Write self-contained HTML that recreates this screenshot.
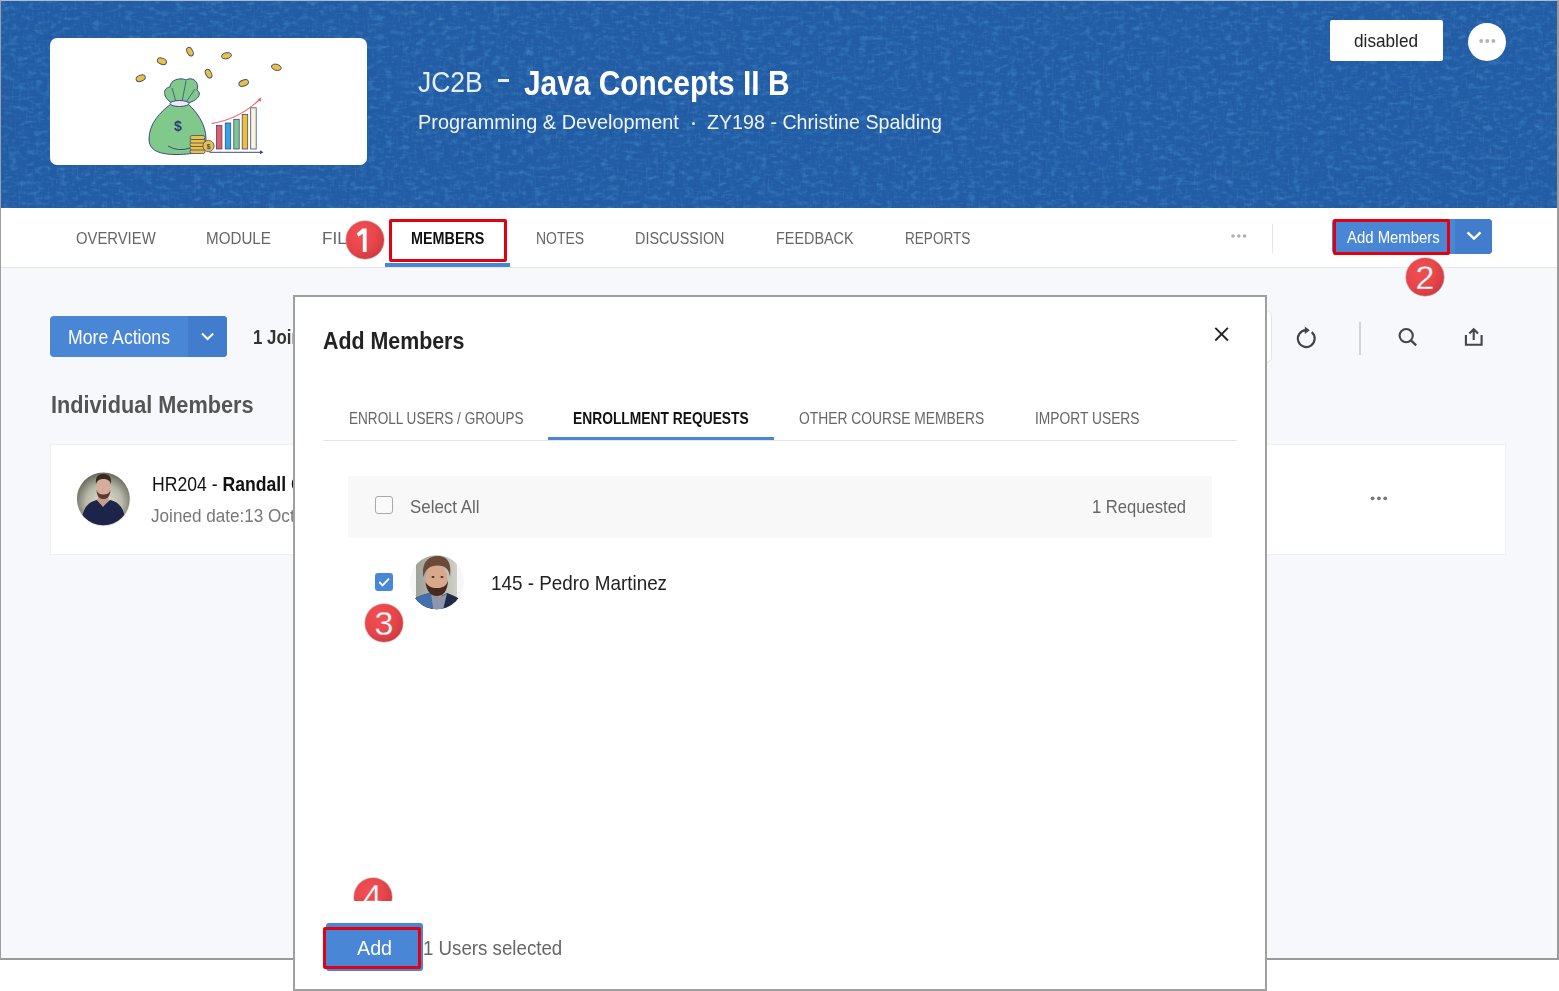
<!DOCTYPE html>
<html><head><meta charset="utf-8">
<style>
*{margin:0;padding:0;box-sizing:border-box}
html,body{width:1559px;height:991px;overflow:hidden;background:#fff;font-family:"Liberation Sans",sans-serif}
.a{position:absolute}
.t{position:absolute;white-space:nowrap;line-height:1;transform-origin:0 0}
#page{position:absolute;left:0;top:0;width:1559px;height:960px;background:#f7f8fb;border-left:1px solid #9c9fa3;border-top:1px solid #a9bdd0;border-right:2px solid #9a9a9a;border-bottom:2px solid #9a9a9a}
#banner{position:absolute;left:1px;top:1px;width:1556px;height:207px;background:#215ca4}
#tabbar{position:absolute;left:1px;top:208px;width:1556px;height:60px;background:#fff;border-bottom:1px solid #e6e8ee}
.badge{position:absolute;width:38px;height:38px;border-radius:50%;background:radial-gradient(circle at 38% 35%,#f24f53 0%,#e7464b 45%,#c9383e 85%,#b8343a 100%);box-shadow:0 0 0 0.5px rgba(150,40,45,.5)}
.badge span{position:absolute;left:0;width:38px;top:1.6px;text-align:center;color:#fff;font-size:34px;line-height:1;-webkit-text-stroke:0.3px #e2464b}
.ico{position:absolute;overflow:visible}
.redbox{position:absolute;border:3px solid #e3000f;border-radius:2px}
.tab{color:#666}
.mt{color:#666}
</style>
<style id="fit">
#jc2b{left:418.00px!important;top:66.52px!important;font-size:29.797px!important;transform:scaleX(0.8889)!important}
#java{left:524.00px!important;top:66.05px!important;font-size:35.902px!important;transform:scaleX(0.8318)!important}
#sub1{left:417.98px!important;top:113.21px!important;font-size:19.477px!important;transform:scaleX(1.0212)!important}
#sub2{left:707.00px!important;top:113.21px!important;font-size:19.477px!important;transform:scaleX(1.0099)!important}
#dis{left:1354.38px!important;top:32.18px!important;font-size:18.631px!important;transform:scaleX(0.9232)!important}
#tab1{left:75.81px!important;top:230.24px!important;font-size:16.425px!important;transform:scaleX(0.9034)!important}
#tab2{left:205.88px!important;top:230.24px!important;font-size:16.425px!important;transform:scaleX(0.9246)!important}
#tab3{left:322.13px!important;top:230.24px!important;font-size:16.425px!important;transform:scaleX(1.0400)!important}
#tab4{left:411.25px!important;top:230.24px!important;font-size:16.425px!important;transform:scaleX(0.8759)!important}
#tab5{left:535.52px!important;top:230.24px!important;font-size:16.425px!important;transform:scaleX(0.8500)!important}
#tab6{left:635.44px!important;top:230.24px!important;font-size:16.425px!important;transform:scaleX(0.8762)!important}
#tab7{left:775.50px!important;top:230.24px!important;font-size:16.425px!important;transform:scaleX(0.8773)!important}
#tab8{left:905.27px!important;top:230.24px!important;font-size:16.425px!important;transform:scaleX(0.8278)!important}
#addm{left:1347.19px!important;top:230.14px!important;font-size:15.843px!important;transform:scaleX(0.9414)!important}
#more{left:67.86px!important;top:327.81px!important;font-size:19.477px!important;transform:scaleX(0.9062)!important}
#join{left:253.18px!important;top:327.22px!important;font-size:20.640px!important;transform:scaleX(0.8178)!important}
#indiv{left:50.86px!important;top:393.34px!important;font-size:23.983px!important;transform:scaleX(0.9049)!important}
#hr{left:151.62px!important;top:475.21px!important;font-size:19.477px!important;transform:scaleX(0.9047)!important}
#joined{left:151.19px!important;top:507.04px!important;font-size:18.024px!important;transform:scaleX(0.9500)!important}
#mtitle{left:322.50px!important;top:329.22px!important;font-size:24.419px!important;transform:scaleX(0.8756)!important}
#m1{left:348.63px!important;top:410.94px!important;font-size:15.843px!important;transform:scaleX(0.8576)!important}
#m2{left:572.88px!important;top:410.94px!important;font-size:15.843px!important;transform:scaleX(0.8726)!important}
#m3{left:799.37px!important;top:410.94px!important;font-size:15.843px!important;transform:scaleX(0.8741)!important}
#m4{left:1035.06px!important;top:410.94px!important;font-size:15.843px!important;transform:scaleX(0.8714)!important}
#sel{left:410.04px!important;top:498.32px!important;font-size:18.460px!important;transform:scaleX(0.9160)!important}
#req{left:1092.48px!important;top:498.32px!important;font-size:18.460px!important;transform:scaleX(0.9000)!important}
#pedro{left:490.63px!important;top:573.66px!important;font-size:19.768px!important;transform:scaleX(0.9546)!important}
#add{left:356.80px!important;top:937.62px!important;font-size:20.640px!important;transform:scaleX(0.9556)!important}
#usel{left:422.90px!important;top:937.62px!important;font-size:20.640px!important;transform:scaleX(0.9066)!important}
</style>
</head>
<body>
<div id="page"></div>
<div id="banner"></div>
<svg class="ico" style="left:1px;top:1px" width="1556" height="207" viewBox="0 0 1556 207">
<filter id="tx" x="0" y="0" width="100%" height="100%">
<feTurbulence type="fractalNoise" baseFrequency="0.45 0.09" numOctaves="3" seed="3" result="n1"/>
<feTurbulence type="fractalNoise" baseFrequency="0.09 0.45" numOctaves="3" seed="7" result="n2"/>
<feBlend in="n1" in2="n2" mode="lighten" result="n"/>
<feColorMatrix in="n" type="matrix" values="0 0 0 0 0.55  0 0 0 0 0.7  0 0 0 0 0.9  2.4 0 0 0 -1.25"/>
</filter>
<filter id="tx2" x="0" y="0" width="100%" height="100%">
<feTurbulence type="fractalNoise" baseFrequency="0.12 0.2" numOctaves="2" seed="11" result="n"/>
<feColorMatrix in="n" type="matrix" values="0 0 0 0 0.05  0 0 0 0 0.25  0 0 0 0 0.58  3 0 0 0 -1.5"/>
</filter>
<rect width="1556" height="207" filter="url(#tx2)" opacity="0.5"/>
<rect width="1556" height="207" filter="url(#tx)" opacity="0.16"/>
</svg>

<!-- logo card -->
<div class="a" style="left:50px;top:38px;width:317px;height:127px;background:#fff;border-radius:7px"></div>
<svg class="ico" style="left:50px;top:38px" width="317" height="127" viewBox="50 38 317 127">
<g fill="#e8c240" stroke="#45497a" stroke-width="0.9">
<ellipse cx="140.7" cy="78.2" rx="4.8" ry="3" transform="rotate(-22 140.7 78.2)"/>
<ellipse cx="161.9" cy="61.2" rx="4.8" ry="3" transform="rotate(22 161.9 61.2)"/>
<ellipse cx="190" cy="51.7" rx="4.6" ry="2.8" transform="rotate(62 190 51.7)"/>
<ellipse cx="226.5" cy="55.7" rx="5" ry="3" transform="rotate(-12 226.5 55.7)"/>
<ellipse cx="208.6" cy="73.7" rx="4.6" ry="2.8" transform="rotate(62 208.6 73.7)"/>
<ellipse cx="243.7" cy="83" rx="5" ry="3" transform="rotate(-22 243.7 83)"/>
<ellipse cx="276.4" cy="67.3" rx="5" ry="3" transform="rotate(15 276.4 67.3)"/>
</g>
<g stroke="#3d4a85" stroke-width="1">
<path d="M172,103 C163,98 162,88 170,87 C170,80 180,77 186,80 C192,76 200,82 197,90 C202,93 199,100 188,103 Z" fill="#80c98b"/>
<path d="M176,102 L172,88 M182,102 L186,81 M186,102 L195,89" fill="none" stroke-width="0.8"/>
<path d="M171,104 C160,112 149,124 149,139 C149,151 160,154.5 177,154.5 C195,154.5 206,151 206,139 C206,124 196,111 188,104 Z" fill="#80c98b"/>
<ellipse cx="179.5" cy="103.5" rx="9.5" ry="3" fill="#eceaf7"/>
<path d="M168,146 Q178,152 190,148" fill="none"/>
</g>
<text x="178" y="131" font-family="Liberation Sans" font-weight="bold" font-size="14" fill="#2f3d7a" text-anchor="middle">$</text>
<g fill="#e8c240" stroke="#45497a" stroke-width="0.8">
<rect x="190" y="149.5" width="15" height="4" rx="2"/>
<rect x="190" y="146" width="15" height="4" rx="2"/>
<rect x="190" y="142.5" width="15" height="4" rx="2"/>
<rect x="190" y="139" width="15" height="4" rx="2"/>
<rect x="190" y="135.5" width="15" height="4" rx="2"/>
<circle cx="208.5" cy="146" r="5.6"/>
</g>
<text x="208.5" y="149" font-family="Liberation Sans" font-weight="bold" font-size="7" fill="#45497a" text-anchor="middle">$</text>
<g stroke="#3d4a85" stroke-width="0.8">
<rect x="216.4" y="125.4" width="5.5" height="23.6" fill="#ea5a62"/>
<rect x="225.3" y="123" width="5.4" height="26" fill="#2fa7e3"/>
<rect x="233.8" y="119.3" width="5.4" height="29.7" fill="#7ec88a"/>
<rect x="242.2" y="114.5" width="5.5" height="34.5" fill="#f2c22e"/>
<rect x="250.7" y="107.8" width="5.5" height="41.2" fill="#fbf3dc"/>
</g>
<path d="M209.5,152.3 L262,152.3" stroke="#3d4a85" stroke-width="1"/>
<path d="M260,150.3 L263.5,152.3 L260,154.3 Z" fill="#3d4a85"/>
<path d="M211.6,123.6 Q240,119 260,99" fill="none" stroke="#ec6a6a" stroke-width="1.1"/>
<path d="M257.5,99.5 L261.5,97.5 L260.5,102 Z" fill="#ec6a6a"/>
</svg>

<!-- title -->
<div class="t" id="jc2b" style="color:#e6eef8">JC2B</div>
<div class="a" style="left:498px;top:79px;width:11px;height:3px;background:#e6eef8"></div>
<div class="t" id="java" style="font-weight:bold;color:#fff">Java Concepts II B</div>
<div class="t" id="sub1" style="color:#f0f4fa">Programming &amp; Development</div>
<div class="a" style="left:692px;top:122px;width:3px;height:3px;border-radius:50%;background:#dfe7f2"></div>
<div class="t" id="sub2" style="color:#f0f4fa">ZY198 - Christine Spalding</div>

<!-- disabled + more -->
<div class="a" style="left:1330px;top:20px;width:113px;height:41px;background:#fff;border-radius:2px"></div>
<div class="t" id="dis" style="color:#222">disabled</div>
<div class="a" style="left:1468px;top:23px;width:38px;height:38px;background:#fff;border-radius:50%"></div>
<svg class="ico" style="left:1468px;top:23px" width="38" height="38" viewBox="1468 23 38 38"><g fill="#b4b4b4"><circle cx="1481.2" cy="41" r="2"/><circle cx="1487.3" cy="41" r="2"/><circle cx="1493.4" cy="41" r="2"/></g></svg>

<div id="tabbar"></div>
<div class="t tab" id="tab1">OVERVIEW</div>
<div class="t tab" id="tab2">MODULE</div>
<div class="t tab" id="tab3">FILES</div>
<div class="t tab" id="tab4" style="color:#111;font-weight:bold">MEMBERS</div>
<div class="t tab" id="tab5">NOTES</div>
<div class="t tab" id="tab6">DISCUSSION</div>
<div class="t tab" id="tab7">FEEDBACK</div>
<div class="t tab" id="tab8">REPORTS</div>
<div class="a" style="left:385px;top:263px;width:125px;height:4px;background:#4a86d6"></div>
<div class="redbox" style="left:389px;top:219px;width:118px;height:43px"></div>
<div class="badge" style="left:346px;top:221px"></div>
<svg class="ico" style="left:346px;top:221px" width="38" height="38" viewBox="346 221 38 38"><path d="M362.6,228.4 L366.6,228.4 L366.6,252 L362.8,252 L362.8,233.8 L358.4,236.8 L356.8,233.6 Z" fill="#fff"/></svg>

<div class="a" style="left:1272px;top:224px;width:1px;height:29px;background:#e6e6e6"></div>
<svg class="ico" style="left:1225px;top:230px" width="28" height="12" viewBox="1225 230 28 12"><g fill="#b0b0b0"><circle cx="1233" cy="236" r="1.8"/><circle cx="1238.8" cy="236" r="1.8"/><circle cx="1244.6" cy="236" r="1.8"/></g></svg>
<div class="a" style="left:1332px;top:219px;width:160px;height:35px;background:#4a86d6;border-radius:4px"></div>
<div class="a" style="left:1455px;top:219px;width:37px;height:35px;background:#427dcd;border-radius:0 4px 4px 0"></div>
<div class="t" id="addm" style="color:#fff">Add Members</div>
<svg class="ico" style="left:1460px;top:225px" width="28" height="20" viewBox="1460 225 28 20"><path d="M1467.5,232.3 L1474,238.5 L1480.5,232.3" fill="none" stroke="#fff" stroke-width="2.4"/></svg>
<div class="redbox" style="left:1333px;top:219px;width:117px;height:36px"></div>
<div class="badge" style="left:1406px;top:258px"><span>2</span></div>

<!-- body -->
<div class="a" style="left:50px;top:316px;width:177px;height:41px;background:#4a86d6;border-radius:4px"></div>
<div class="a" style="left:188px;top:316px;width:39px;height:41px;background:#427dcd;border-radius:0 4px 4px 0"></div>
<div class="t" id="more" style="color:#fff">More Actions</div>
<svg class="ico" style="left:195px;top:326px" width="24" height="20" viewBox="195 326 24 20"><path d="M202,333.5 L207.6,339 L213.2,333.5" fill="none" stroke="#fff" stroke-width="2"/></svg>
<!-- search input edge behind modal -->
<div class="a" style="left:1180px;top:310px;width:92px;height:53px;border:1px solid #e3e5ea;border-radius:6px;background:#fff"></div>
<svg class="ico" style="left:1290px;top:318px" width="200" height="40" viewBox="1290 318 200 40">
<path d="M1311.7,332.2 A8.4,8.4 0 1 1 1305.8,330.2" fill="none" stroke="#444" stroke-width="2.2"/>
<path d="M1304.8,326.4 L1309.8,330.2 L1304.8,334 Z" fill="#444"/>
<circle cx="1406.2" cy="335.6" r="6.6" fill="none" stroke="#444" stroke-width="2.1"/>
<path d="M1411,340.4 L1416.2,345.4" stroke="#444" stroke-width="2.2"/>
<path d="M1465.9,335 L1465.9,344.7 L1481.6,344.7 L1481.6,335" fill="none" stroke="#444" stroke-width="2.1"/>
<path d="M1473.7,340 L1473.7,329.5 M1469.4,333.6 L1473.7,329.2 L1478,333.6" fill="none" stroke="#444" stroke-width="2.1"/>
</svg>
<div class="a" style="left:1359px;top:322px;width:1.5px;height:33px;background:#d3d3d3"></div>
<div class="t" id="join" style="font-weight:bold;color:#333">1 Joi<span class="x">ned</span></div>
<div class="t" id="indiv" style="font-weight:bold;color:#555">Individual Members</div>

<div class="a" style="left:50px;top:444px;width:1456px;height:111px;background:#fff;border:1px solid #eef0f3"></div>
<svg class="ico" style="left:1365px;top:492px" width="28" height="12" viewBox="1365 492 28 12"><g fill="#777"><circle cx="1372.6" cy="498.3" r="1.9"/><circle cx="1378.9" cy="498.3" r="1.9"/><circle cx="1385.2" cy="498.3" r="1.9"/></g></svg>
<svg class="ico" style="left:74px;top:470px" width="60" height="60" viewBox="74 470 60 60">
<defs>
<radialGradient id="rg1" cx="0.5" cy="0.55" r="0.55"><stop offset="0" stop-color="#e4e4d6"/><stop offset="0.55" stop-color="#b9b9aa"/><stop offset="1" stop-color="#55554b"/></radialGradient>
<clipPath id="cp1"><circle cx="103.3" cy="498.8" r="26.4"/></clipPath>
</defs>
<circle cx="103.6" cy="499.8" r="26.6" fill="#000" opacity="0.12"/>
<g clip-path="url(#cp1)">
<rect x="74" y="470" width="60" height="60" fill="url(#rg1)"/>
<path d="M81,530 C81,508 88,502 97,500 L103,506 L110,500 C119,502 126,508 126,530 Z" fill="#1d244a"/>
<path d="M97,500 L103,507 L109,500 L107,495 L99,495 Z" fill="#c79c88"/>
<ellipse cx="103.3" cy="487.5" rx="7.2" ry="9" fill="#d6ad9b"/>
<path d="M96,484 C95,476 99,474 103.5,474 C108,474 112,476 111,484 C110,480 107,479 103.5,479 C100,479 97,480 96,484 Z" fill="#3b2a24"/>
<path d="M96.5,490 C97,497 100,499 103.5,499 C107,499 110,497 110.5,490 C109,494 106,494.5 103.5,494.5 C101,494.5 98,494 96.5,490 Z" fill="#5a3a2e"/>
</g>
</svg>
<div class="t" id="hr" style="color:#111">HR204 - <b>Randall</b><b class="x"> Cole</b></div>
<div class="t" id="joined" style="color:#777">Joined date:13<span class="x"> Oct 2023</span></div>

<!-- modal -->
<div class="a" style="left:293px;top:295px;width:974px;height:696px;background:#fff;border:2px solid #a0a0a0"></div>
<div class="t" id="mtitle" style="font-weight:bold;color:#222">Add Members</div>
<svg class="ico" style="left:1210px;top:322px" width="24" height="24" viewBox="1210 322 24 24"><path d="M1215.3,327.9 L1227.9,340.5 M1227.9,327.9 L1215.3,340.5" stroke="#222" stroke-width="1.9"/></svg>

<div class="t mt" id="m1">ENROLL USERS / GROUPS</div>
<div class="t mt" id="m2" style="color:#111;font-weight:bold">ENROLLMENT REQUESTS</div>
<div class="t mt" id="m3">OTHER COURSE MEMBERS</div>
<div class="t mt" id="m4">IMPORT USERS</div>
<div class="a" style="left:323px;top:440px;width:914px;height:1px;background:#e5e5e5"></div>
<div class="a" style="left:548px;top:437px;width:226px;height:3px;background:#4a86d6"></div>

<div class="a" style="left:348px;top:476px;width:864px;height:62px;background:#f8f8f8"></div>
<div class="a" style="left:375px;top:496px;width:18px;height:18px;border:1.5px solid #a8a8ad;border-radius:3px;background:#fafafa"></div>
<div class="t" id="sel" style="color:#666">Select All</div>
<div class="t" id="req" style="color:#666">1 Requested</div>

<div class="a" style="left:375px;top:573px;width:18px;height:18px;background:#4a86d6;border-radius:3px"></div>
<svg class="ico" style="left:375px;top:573px" width="18" height="18" viewBox="375 573 18 18"><path d="M379.3,582 L382.6,585.3 L389,578.6" fill="none" stroke="#fff" stroke-width="1.9"/></svg>
<svg class="ico" style="left:405px;top:550px" width="64" height="64" viewBox="405 550 64 64">
<defs>
<clipPath id="cp2"><circle cx="436.8" cy="582.2" r="27"/></clipPath>
<linearGradient id="lg2" x1="0" y1="0" x2="1" y2="0"><stop offset="0" stop-color="#9ea299"/><stop offset="0.6" stop-color="#b8bab1"/><stop offset="1" stop-color="#cfd0c8"/></linearGradient>
</defs>
<circle cx="436.8" cy="582.2" r="27" fill="#f7f7f7"/>
<g clip-path="url(#cp2)">
<rect x="416" y="550" width="41" height="64" fill="url(#lg2)"/>
<path d="M412,614 L414,599 C420,595 427,593.5 432,593 L439,597 L447,593 C453,595 459,598 463,601 L463,614 Z" fill="#1f2b47"/>
<path d="M412,614 L414,599 C420,595 426,593.5 431.5,593 L435,614 Z" fill="#4270ad"/>
<path d="M431,593.5 L434,614 L442,614 L447,593.5 L440,597 Z" fill="#8d96aa"/>
<path d="M433,591 L440,598 L446,591 Z" fill="#c9977e"/>
<ellipse cx="436.5" cy="578.5" rx="10.8" ry="13.5" fill="#d8a88d"/>
<path d="M423.5,577 C421,562 429,556 437.5,556 C447,556 452,562 450,577 C449,569 445,565.5 437.5,565.5 C430,565.5 425.5,569 423.5,577 Z" fill="#6b4a37"/>
<path d="M425.5,582 C426.5,592 431.5,596 437,596 C443,596 447.5,592 448,580 C446.5,586 443.5,588 437,588 C431,588 428,586 425.5,582 Z" fill="#46291f"/>
<ellipse cx="433" cy="577" rx="1.6" ry="0.9" fill="#4a3328"/><ellipse cx="442" cy="577" rx="1.6" ry="0.9" fill="#4a3328"/>
</g>
</svg>
<div class="t" id="pedro" style="color:#222">145 - Pedro Martinez</div>
<div class="badge" style="left:365px;top:604px"><span>3</span></div>

<div class="a" style="left:350px;top:870px;width:46px;height:30.6px;overflow:hidden"><div class="badge" style="left:3.5px;top:7.6px"><span>4</span></div></div>
<div class="a" style="left:326px;top:923px;width:97px;height:48px;background:#4a86d6;border-radius:3px"></div>
<div class="redbox" style="left:323px;top:927px;width:98px;height:42px"></div>
<div class="t" id="add" style="color:#fff">Add</div>
<div class="t" id="usel" style="color:#666">1 Users selected</div>

</body></html>
